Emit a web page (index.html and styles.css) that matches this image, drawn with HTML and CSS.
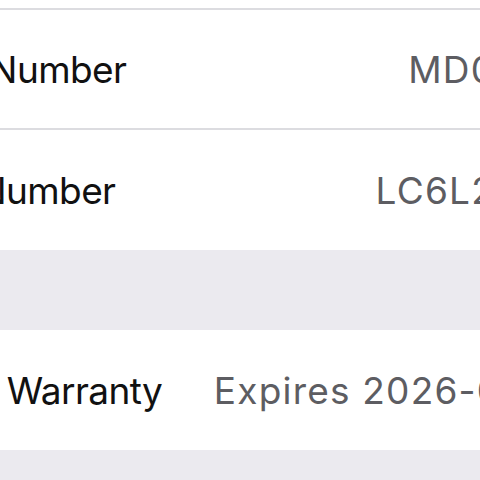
FILE: index.html
```html
<!DOCTYPE html>
<html lang="en">
<head>
    <meta charset="UTF-8">
    <meta name="viewport" content="width=device-width, initial-scale=1.0">
    <title>About</title>
    <link rel="stylesheet" href="styles.css">
</head>
<body>
    <div class="about">
        <div class="group group-first">
            <div class="row">
                <span class="label">Model Name</span>
                <span class="value">iPhone</span>
            </div>
            <div class="row">
                <span class="label">Model Number</span>
                <span class="value">MD034LL/A</span>
            </div>
            <div class="row">
                <span class="label">Serial Number</span>
                <span class="value">LC6L2K7MPX</span>
            </div>
        </div>

        <div class="group">
            <div class="row">
                <span class="label">Limited Warranty</span>
                <span class="value">Expires 2026-09-18</span>
                <svg class="chevron" width="18" height="30" viewBox="0 0 18 30">
                    <path d="M3 3 L15 15 L3 27" fill="none" stroke="#c4c4c7" stroke-width="4" stroke-linecap="round" stroke-linejoin="round"/>
                </svg>
            </div>
        </div>
    </div>
</body>
</html>
```

FILE: styles.css
```css
body {
    margin: 0;
    height: 480px;
    overflow: hidden;
    background: #ebeaef;
    font-family: 'Inter', 'Noto Sans', sans-serif;
}

.about {
    width: 780px;
    margin-left: -126px;
}

.group {
    background: #fff;
    margin-bottom: 80px;
}

.group-first {
    margin-top: -110px;
}

.row {
    height: 118px;
    padding: 0 25px 0 0;
    display: flex;
    align-items: center;
    border-bottom: 2px solid #dcdce0;
    font-size: 37px;
    letter-spacing: -0.6px;
}

.row:last-child {
    height: 120px;
    border-bottom: none;
}

.label {
    color: #111;
    flex: 1;
}

.value {
    color: #5d5d62;
    letter-spacing: 1.2px;
}

.chevron {
    margin-left: 27px;
    flex-shrink: 0;
}
```
